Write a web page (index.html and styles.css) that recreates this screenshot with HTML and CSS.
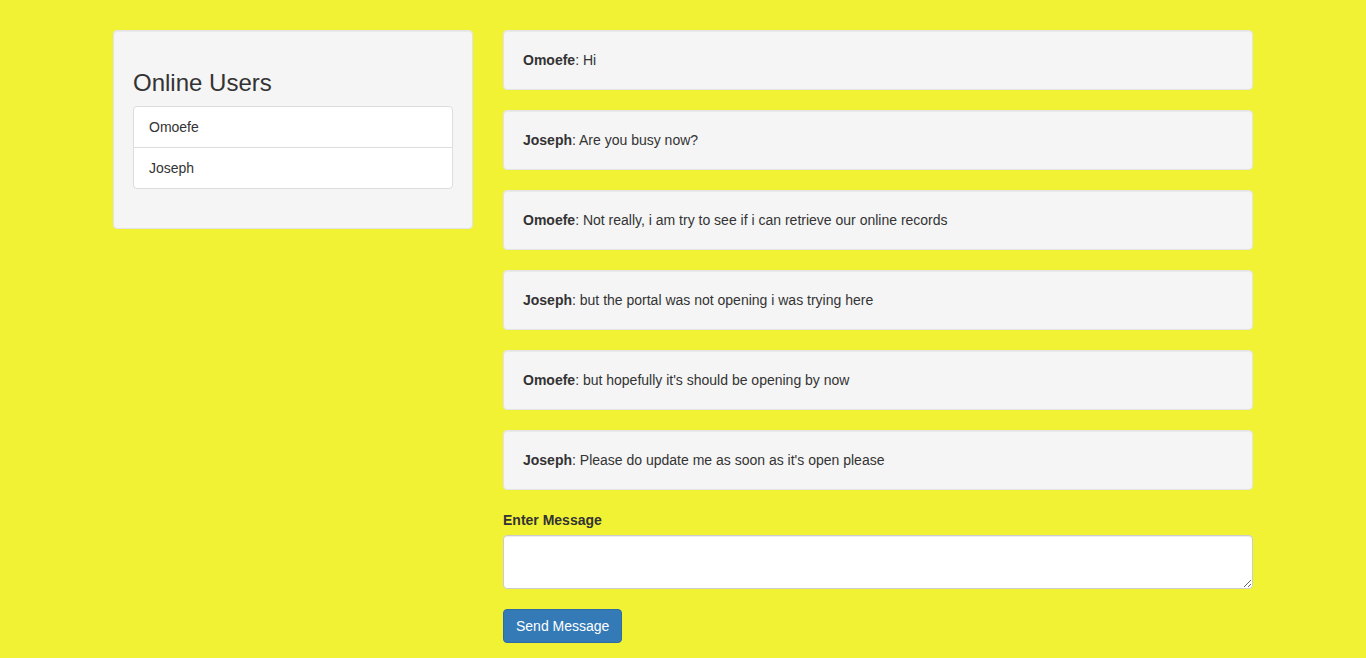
FILE: index.html
```html
<!DOCTYPE html>
<html lang="en">
<head>
<meta charset="utf-8">
<title>Chat</title>
<link rel="stylesheet" href="styles.css">
</head>
<body>
<div class="container">
  <div class="col-left">
    <div class="well">
      <h3 class="title">Online Users</h3>
      <ul class="list-group">
        <li class="list-group-item">Omoefe</li>
        <li class="list-group-item">Joseph</li>
      </ul>
    </div>
  </div>
  <div class="col-right">
    <div class="well"><strong>Omoefe</strong>: Hi</div>
    <div class="well"><strong>Joseph</strong>: Are you busy now?</div>
    <div class="well"><strong>Omoefe</strong>: Not really, i am try to see if i can retrieve our online records</div>
    <div class="well"><strong>Joseph</strong>: but the portal was not opening i was trying here</div>
    <div class="well"><strong>Omoefe</strong>: but hopefully it's should be opening by now</div>
    <div class="well"><strong>Joseph</strong>: Please do update me as soon as it's open please</div>
    <form class="chat-form">
      <div class="form-group">
        <label class="label" for="msg">Enter Message</label>
        <textarea id="msg" class="form-control" rows="2"></textarea>
      </div>
      <button type="button" class="btn">Send Message</button>
    </form>
  </div>
</div>
</body>
</html>
```
FILE: styles.css
```css
* { box-sizing: border-box; }
html, body { margin: 0; padding: 0; }
body {
  background: #f2f235;
  font-family: "Liberation Sans", Arial, Helvetica, sans-serif;
  font-size: 14px;
  line-height: 20px;
  color: #333;
}
.container {
  width: 1170px;
  margin: 30px auto 0;
  display: flex;
}
.col-left { width: 390px; padding: 0 15px; }
.col-right { width: 780px; padding: 0 15px; }
.well {
  background: #f5f5f5;
  border: 1px solid #e3e3e3;
  border-radius: 4px;
  padding: 19px;
  margin-bottom: 20px;
  box-shadow: inset 0 1px 1px rgba(0,0,0,.05);
  min-height: 20px;
}
.well strong { font-weight: bold; }
.title {
  font-size: 24px;
  font-weight: 500;
  line-height: 1.1;
  margin: 20px 0 10px;
}
.list-group {
  list-style: none;
  margin: 0 0 20px;
  padding: 0;
}
.list-group-item {
  background: #fff;
  border: 1px solid #ddd;
  padding: 10px 15px;
  margin-bottom: -1px;
}
.list-group-item:first-child { border-radius: 4px 4px 0 0; }
.list-group-item:last-child { border-radius: 0 0 4px 4px; margin-bottom: 0; }
.form-group { margin-bottom: 20px; }
.label {
  display: block;
  font-weight: bold;
  margin-bottom: 5px;
}
.form-control {
  display: block;
  width: 100%;
  height: 54px;
  padding: 6px 12px;
  font-family: inherit;
  font-size: 14px;
  line-height: 20px;
  color: #555;
  background: #fff;
  border: 1px solid #ccc;
  border-radius: 4px;
  box-shadow: inset 0 1px 1px rgba(0,0,0,.075);
  margin: 0;
}
.btn {
  display: inline-block;
  padding: 6px 12px;
  font-family: inherit;
  font-size: 14px;
  line-height: 20px;
  color: #fff;
  background: #337ab7;
  border: 1px solid #2e6da4;
  border-radius: 4px;
  cursor: pointer;
}
```
